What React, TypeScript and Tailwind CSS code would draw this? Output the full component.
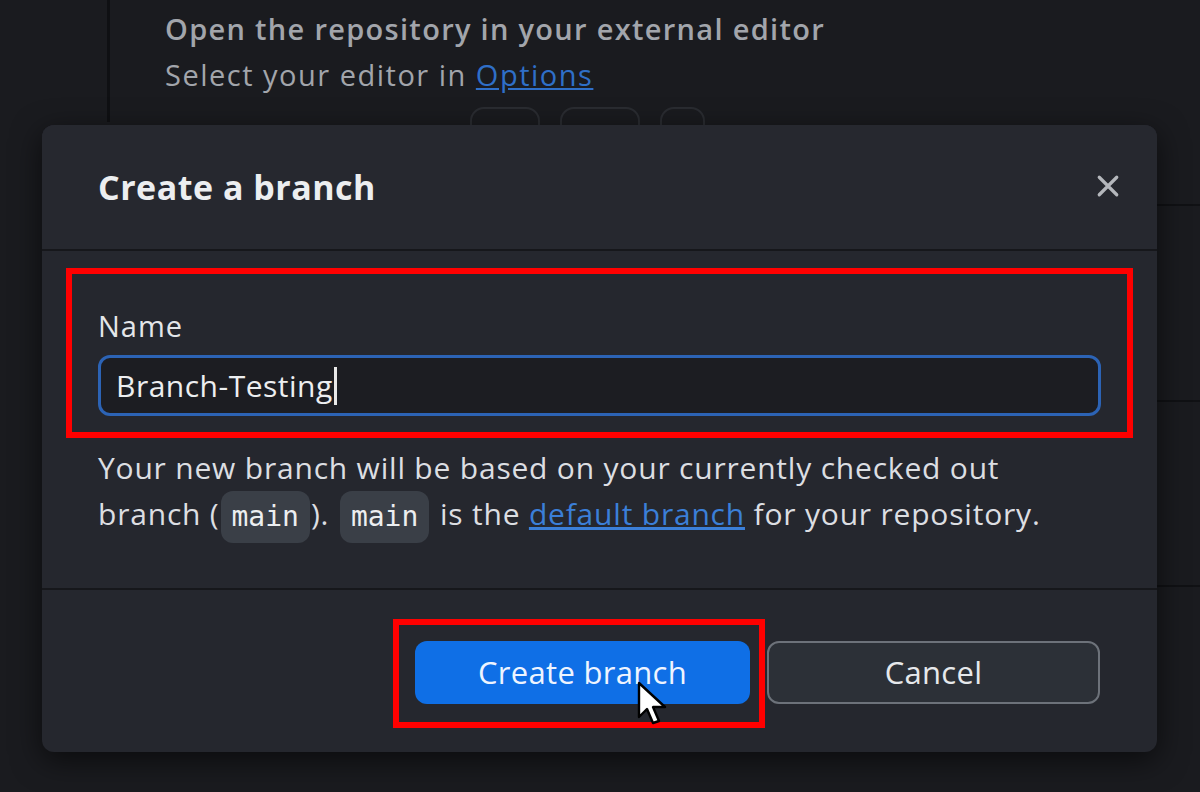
import React from "react";

const sans = { fontFamily: '"Open Sans", "Noto Sans", sans-serif' };
const mono = { fontFamily: '"DejaVu Sans Mono", monospace' };

function Cursor() {
  return (
    <svg width="34" height="46" viewBox="0 0 17 23" className="absolute left-[222px] top-[40px]">
      <path d="M1 1 L1 18 L5 14 L8 21 L11 20 L8 13 L14 13 Z" fill="#ffffff" stroke="#000000" strokeWidth="1.2" strokeLinejoin="round" />
    </svg>
  );
}

export default function App() {
  return (
    <div className="relative w-[1200px] h-[792px] overflow-hidden bg-[#1a1b1f]" style={sans}>
      {/* background app */}
      <div className="flex h-full">
        <div className="w-[110px] h-[122px] border-r-[3px] border-[#0f1013]" />
        <div className="flex-1 flex flex-col">
          <div className="pl-[55px] pt-[6px] text-[#a2a5ab] text-[29px] font-semibold leading-[46px] tracking-[1.3px]">
            <div>Open the repository in your external editor</div>
            <div className="font-normal tracking-[1.5px]">
              Select your editor in <span className="text-[#2f6fc8] underline">Options</span>
            </div>
          </div>
          <div className="flex pl-[360px] pt-[9px] gap-[20px]">
            <div className="w-[70px] h-[40px] rounded-[14px] border-2 border-[#2a2c31]" />
            <div className="w-[80px] h-[40px] rounded-[14px] border-2 border-[#2a2c31]" />
            <div className="w-[45px] h-[40px] rounded-[14px] border-2 border-[#2a2c31]" />
          </div>
        </div>
      </div>
      {/* right-edge background separators */}
      <div className="absolute left-[1150px] right-0 top-[204px] h-[2px] bg-[#101114]" />
      <div className="absolute left-[1150px] right-0 top-[400px] h-[2px] bg-[#101114]" />
      <div className="absolute left-[1150px] right-0 top-[585px] h-[2px] bg-[#101114]" />

      {/* dialog */}
      <div className="absolute left-[42px] top-[125px] w-[1115px] h-[627px] rounded-[12px] bg-[#25272e] shadow-[0_8px_30px_rgba(0,0,0,0.6)] flex flex-col overflow-hidden">
        <div className="h-[124px] flex items-center justify-between pl-[56px] pr-[34px] bg-[#26282f]">
          <div className="text-[34px] font-bold text-[#eceef0] tracking-[0.5px] pt-[1px]">Create a branch</div>
          <svg width="30" height="30" viewBox="0 0 24 24" className="mt-[-2px]">
            <path d="M5 5 L19 19 M19 5 L5 19" stroke="#b4b7bc" strokeWidth="2.6" strokeLinecap="round" />
          </svg>
        </div>
        <div className="h-[2px] bg-[#16171b]" />
        <div className="px-[24px] pt-[17px] pb-[45px]">
          <div className="border-[6px] border-[#ff0000] pl-[26px] pr-[26px] pt-[36px] pb-[16px]">
            <div className="text-[29px] text-[#e4e6e9] leading-[32px] mb-[13px] tracking-[1px]">Name</div>
            <div className="h-[61px] rounded-[12px] border-[3px] border-[#2c63b5] bg-[#1c1d22] flex items-center pl-[15px]">
              <span className="text-[30px] text-[#eceef0] tracking-[0.5px]">Branch-Testing</span>
              <span className="w-[3px] h-[38px] bg-[#e8e8e8] ml-[1px]" />
            </div>
          </div>
          <div className="pl-[32px] pt-[7px] text-[30px] leading-[46px] text-[#dcdee2] tracking-[0.8px]">
            <div>Your new branch will be based on your currently checked out</div>
            <div className="whitespace-nowrap">
              branch (
              <span className="inline-block rounded-[12px] bg-[#3a3f47] px-[11px] leading-[52px] text-[28px] text-[#eceef0] align-middle mx-[1px] tracking-normal" style={mono}>main</span>
              ).{" "}
              <span className="inline-block rounded-[12px] bg-[#3a3f47] px-[11px] leading-[52px] text-[28px] text-[#eceef0] align-middle mx-[2px] tracking-normal" style={mono}>main</span>
              {" "}is the <span className="text-[#3b7fd8] underline">default branch</span> for your repository.
            </div>
          </div>
        </div>
        <div className="h-[2px] bg-[#16171b]" />
        <div className="flex-1 flex justify-end items-start pt-[51px] pr-[57px] gap-[17px]">
          <div className="relative w-[335px] h-[63px] rounded-[12px] bg-[#0f6fe6] flex items-center justify-center text-[31px] text-[#eef4ff] tracking-[0.3px]">
            Create branch
            <div className="absolute left-[-22px] right-[-15px] top-[-22px] bottom-[-24px] border-[6px] border-[#ff0000]" />
            <Cursor />
          </div>
          <div className="w-[333px] h-[63px] rounded-[12px] bg-[#2c3037] border-2 border-[#6d727a] flex items-center justify-center text-[31px] text-[#e6e8eb] tracking-[0.3px]">
            Cancel
          </div>
        </div>
      </div>
    </div>
  );
}
